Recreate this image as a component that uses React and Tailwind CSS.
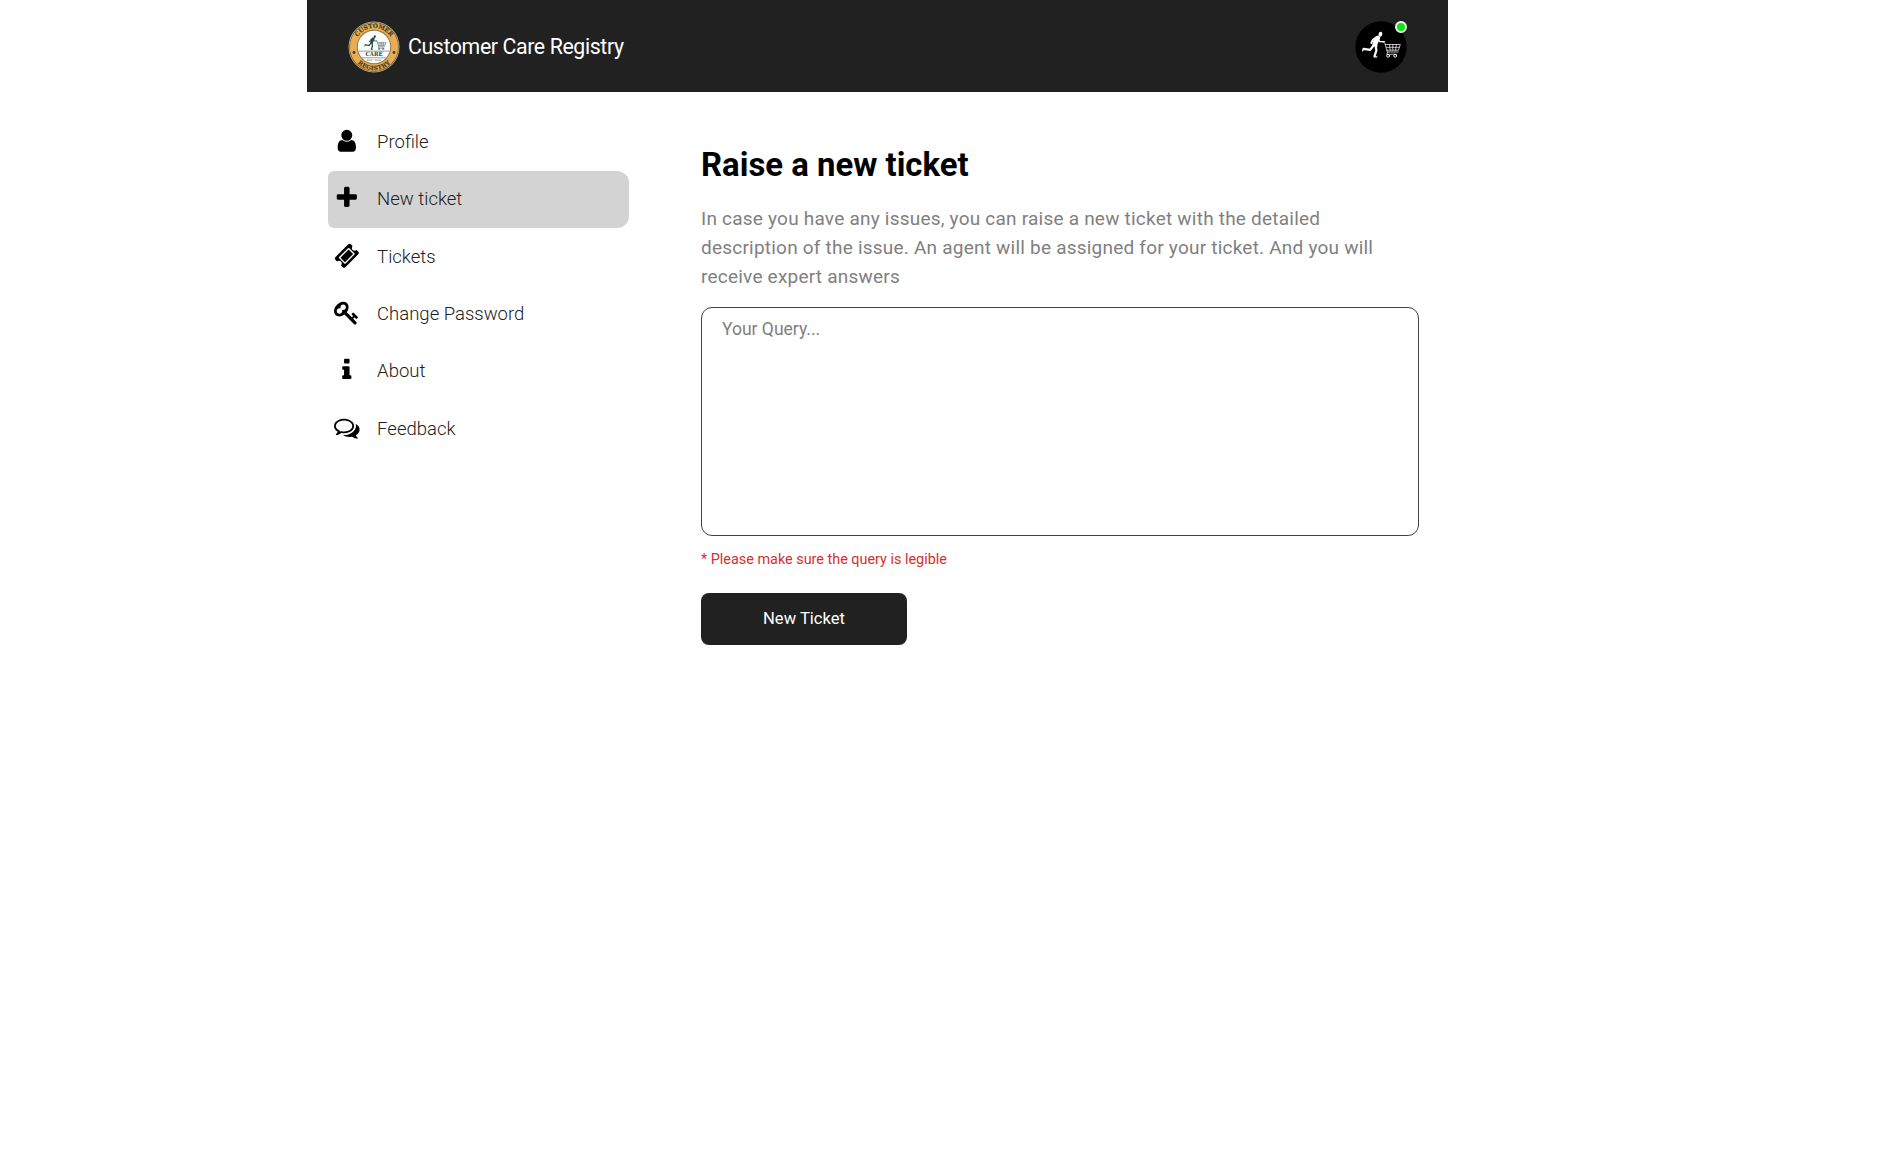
const ICONS = {
  user: "M1536 1399q0 109-62.5 187t-150.5 78h-854q-88 0-150.5-78t-62.5-187q0-85 8.5-160.5t31.5-152 58.5-131 94-89 134.5-34.5q131 128 313 128t313-128q76 0 134.5 34.5t94 89 58.5 131 31.5 152 8.5 160.5zm-256-887q0 159-112.5 271.5t-271.5 112.5-271.5-112.5-112.5-271.5 112.5-271.5 271.5-112.5 271.5 112.5 112.5 271.5z",
  plus: "M1600 736v192q0 40-28 68t-68 28h-416v416q0 40-28 68t-68 28h-192q-40 0-68-28t-28-68v-416h-416q-40 0-68-28t-28-68v-192q0-40 28-68t68-28h416v-416q0-40 28-68t68-28h192q40 0 68 28t28 68v416h416q40 0 68 28t28 68z",
  ticket: "M1024 452l316 316-572 572-316-316zm-211 979l618-618q19-19 19-45t-19-45l-362-362q-18-18-45-18t-45 18l-618 618q-19 19-19 45t19 45l362 362q18 18 45 18t45-18zm889-637l-907 908q-37 37-90.5 37t-90.5-37l-126-126q56-56 56-136t-56-136-136-56-136 56l-125-126q-37-37-37-90.5t37-90.5l907-906q37-37 90.5-37t90.5 37l125 125q-56 56-56 136t56 136 136 56 136-56l126 125q37 37 37 90.5t-37 90.5z",
  key: "M832 512q0-80-56-136t-136-56-136 56-56 136q0 42 19 83-41-19-83-19-80 0-136 56t-56 136 56 136 136 56 136-56 56-136q0-42-19-83 41 19 83 19 80 0 136-56t56-136zm851 704q0 17-49 66t-66 49q-9 0-28.5-16t-36.5-33-38.5-40-24.5-26l-96 96 220 220q28 28 28 68 0 42-39 81t-81 39q-40 0-68-28l-671-671q-176 131-365 131-163 0-265.5-102.5t-102.5-265.5q0-160 95-313t248-248 313-95q163 0 265.5 102.5t102.5 265.5q0 189-131 365l355 355 96-96q-3-3-26-24.5t-40-38.5-33-36.5-16-28.5q0-17 49-66t66-49q13 0 23 10 6 6 46 44.5t82 79.5 86.5 86 73 78 28.5 41z",
  info: "M1216 1344v128q0 26-19 45t-45 19h-512q-26 0-45-19t-19-45v-128q0-26 19-45t45-19h64v-384h-64q-26 0-45-19t-19-45v-128q0-26 19-45t45-19h384q26 0 45 19t19 45v576h64q26 0 45 19t19 45zm-128-1152v192q0 26-19 45t-45 19h-256q-26 0-45-19t-19-45v-192q0-26 19-45t45-19h256q26 0 45 19t19 45z",
  comments: "M704 384q-153 0-286 52t-211.5 141-78.5 191q0 82 53 158t149 132l97 56-35 84q34-20 62-39l44-31 53 10q78 14 153 14 153 0 286-52t211.5-141 78.5-191-78.5-191-211.5-141-286-52zm0-128q191 0 353.5 68.5t256.5 186.5 94 257-94 257-256.5 186.5-353.5 68.5q-86 0-176-16-124 88-278 128-36 9-86 16h-3q-11 0-20.5-8t-11.5-21q-1-3-1-6.5t.5-6.5 2-6l2.5-5 3.5-5.5 4-5 4.5-5 4-4.5q5-6 23-25t26-29.5 22.5-29 25-38.5 20.5-44q-124-72-195-177t-71-224q0-139 94-257t256.5-186.5 353.5-68.5zm822 1169q10 24 20.5 44t25 38.5 22.5 29 26 29.5 23 25q1 1 4 4.5t4.5 5 4 5 3.5 5.5l2.5 5 2 6 .5 6.5-1 6.5q-3 14-13 22t-22 7q-50-7-86-16-154-40-278-128-90 16-176 16-271 0-472-132 58 4 88 4 161 0 309-45t264-129q125-92 192-212t67-254q0-77-23-152 129 71 204 178t75 230q0 120-71 224.5t-195 176.5z",
};

const NAV = [
  { label: "Profile", icon: "user" },
  { label: "New ticket", icon: "plus", active: true },
  { label: "Tickets", icon: "ticket" },
  { label: "Change Password", icon: "key" },
  { label: "About", icon: "info" },
  { label: "Feedback", icon: "comments" },
];

function Icon({ name }) {
  return (
    <svg viewBox="0 0 1792 1792" className="mb-[3px] size-[25.6px] shrink-0 fill-black">
      <path d={ICONS[name]} />
    </svg>
  );
}

/* Runner pushing a shopping cart, drawn on a 38x27 area. */
function Runner({ color }) {
  return (
    <g fill="none" stroke={color} strokeLinecap="round" strokeLinejoin="round">
      <ellipse cx="18.6" cy="2.7" rx="1.9" ry="2.5" fill={color} stroke="none" transform="rotate(15 18.6 2.7)" />
      <path d="M15.2 4.3c2.2-.3 3.6.7 3.2 2.5l-2.9 6.5 .3 1.9-5.3-.8c.1-3.7 1.6-8.3 4.7-10.1z" fill={color} stroke="none" />
      <path d="M15 5.4 11.2 8 9.4 11.5" strokeWidth="1.7" />
      <path d="M16.6 8.2 18 10.1 22.5 10.3" strokeWidth="1.4" />
      <path d="M12.2 13.5 8.3 18.4 1.8 17.4" strokeWidth="2.2" />
      <path d="M1.7 17.2 .9 19.3" strokeWidth="1.3" />
      <path d="M13.8 14 14.6 18.8 12.7 24.7" strokeWidth="2.2" />
      <path d="M12.5 25.3H15" strokeWidth="1.3" />
      <path d="M21.5 10.3 23 11.8 25.6 20.5H36.3M23.6 13H38.5L36.6 18.7H25M24.4 15.8H37.5M27.7 13l.7 5.7M31 13v5.7M34.5 13l-.7 5.7M26 20.5l-1.2 2.3h9.8" strokeWidth=".7" />
      <circle cx="26.3" cy="24.3" r="1.4" strokeWidth=".9" />
      <circle cx="33.3" cy="24.3" r="1.4" strokeWidth=".9" />
    </g>
  );
}

function Logo() {
  return (
    <svg viewBox="0 0 52 52" className="size-[52px] shrink-0">
      <defs>
        <path id="arc-top" d="M6.8 26a19.2 19.2 0 0 1 38.4 0" />
        <path id="arc-bottom" d="M2.9 26a23.1 23.1 0 0 0 46.2 0" />
      </defs>
      <circle cx="26" cy="26" r="25.5" fill="#c6b28a" />
      <circle cx="26" cy="26" r="24.7" fill="#4c4a3c" />
      <circle cx="26" cy="26" r="24.2" fill="#e8ad50" />
      <circle cx="26" cy="26" r="17.2" fill="#8b7950" />
      <circle cx="26" cy="26" r="16.2" fill="#fdfefb" />
      <g fontFamily="'DejaVu Serif', serif" fontWeight="700" fill="#463f28" textAnchor="middle">
        <text fontSize="5.8" stroke="#463f28" strokeWidth=".2"><textPath href="#arc-top" startOffset="50%">CUSTOMER</textPath></text>
        <text fontSize="5.8" letterSpacing=".3" stroke="#463f28" strokeWidth=".2"><textPath href="#arc-bottom" startOffset="50%">REGISTRY</textPath></text>
        <text x="26" y="35" fontSize="5.8" fill="#24464a" textLength="17" lengthAdjust="spacingAndGlyphs">CARE</text>
        <text x="26" y="40" fontSize="2.4" fill="#6f8580">EST · 2022</text>
      </g>
      <path d="M10.5 30.1H41.5M14 36.8H38" stroke="#4b6867" strokeWidth=".6" />
      <circle cx="6" cy="31.5" r="1.4" fill="#463f28" />
      <circle cx="46" cy="31.5" r="1.4" fill="#463f28" />
      <g transform="translate(16.3 14.2) scale(.56)"><Runner color="#24464a" /></g>
    </svg>
  );
}

function Avatar() {
  return (
    <div className="relative size-[52px]">
      <svg viewBox="0 0 52 52" className="size-[52px]">
        <circle cx="26" cy="26" r="25.7" fill="#000" />
        <g transform="translate(6.8 10.5)"><Runner color="#fff" /></g>
      </svg>
      <span className="absolute top-0 right-0 size-3 rounded-full border-2 border-[#eaffea] bg-[#13e01b]" />
    </div>
  );
}

export default function App() {
  return (
    <div className="min-h-screen bg-white font-[Roboto,sans-serif] text-black">
      <div className="ml-[307px] w-[1141px]">
        <header className="flex h-[92px] items-center justify-between bg-[#212121] pt-px pr-[41px] pl-[41px]">
          <div className="flex items-center">
            <Logo />
            <span className="ml-2 text-[21.3px] tracking-[-0.38px] text-white">Customer Care Registry</span>
          </div>
          <Avatar />
        </header>
        <div className="flex">
          <nav className="ml-[21px] w-[301px] pt-[21.5px]">
            {NAV.map((item) => (
              <a
                key={item.label}
                className={
                  item.active
                    ? "flex h-[57.4px] items-center rounded-l-md rounded-r-xl bg-[#d3d3d3] pl-1.5"
                    : "flex h-[57.4px] items-center pl-1.5"
                }
              >
                <Icon name={item.icon} />
                <span className="mt-px ml-[17.5px] text-[18.5px] font-light text-[#212121]">{item.label}</span>
              </a>
            ))}
          </nav>
          <main className="ml-[72px] w-[718px] pt-[51px]">
            <h1 className="text-[32.9px] leading-[44px] font-bold">Raise a new ticket</h1>
            <p className="mt-[17px] text-[19px] leading-[29.2px] tracking-[0.22px] text-[#808080]">
              In case you have any issues, you can raise a new ticket with the detailed
              <br />
              description of the issue. An agent will be assigned for your ticket. And you will
              <br />
              receive expert answers
            </p>
            <textarea
              placeholder="Your Query..."
              className="mt-[15.4px] block h-[229px] w-full resize-none rounded-[11px] border border-[#444] px-5 py-[9px] text-[17.5px] leading-6 placeholder:text-[#808080]"
            />
            <p className="mt-[14px] text-[14.4px] leading-5 text-[#d32f2f]">* Please make sure the query is legible</p>
            <button className="mt-[23px] block h-[52px] w-[206px] rounded-lg bg-[#212121] text-[16.6px] text-white">
              New Ticket
            </button>
          </main>
        </div>
      </div>
    </div>
  );
}
